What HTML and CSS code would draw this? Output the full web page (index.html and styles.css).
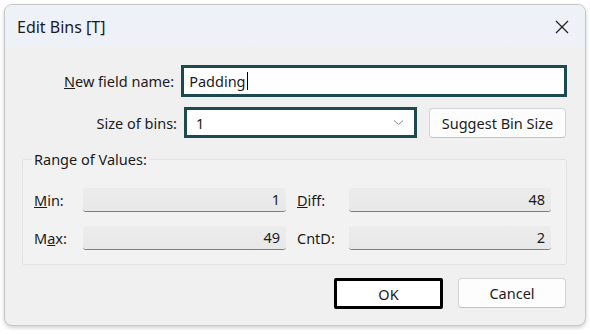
FILE: index.html
```html
<!DOCTYPE html>
<html lang="en">
<head>
    <meta charset="UTF-8">
    <title>Edit Bins [T]</title>
    <link rel="stylesheet" href="styles.css">
</head>
<body>
    <div class="dialog">
        <div class="titlebar">
            <span class="title">Edit Bins [T]</span>
            <svg class="close" width="14" height="14" viewBox="0 0 14 14">
                <path d="M1 1 L13 13 M13 1 L1 13" stroke="#222" stroke-width="1.3" fill="none"/>
            </svg>
        </div>
        <div class="content">
            <div class="row">
                <label class="label"><u>N</u>ew field name:</label>
                <div class="textbox focus">Padding<span class="caret"></span></div>
            </div>
            <div class="row">
                <label class="label">Size of bins:</label>
                <div class="textbox select focus">
                    <span>1</span>
                    <svg width="11" height="7" viewBox="0 0 11 7">
                        <path d="M1 1.5 L5.5 5.5 L10 1.5" stroke="#888" stroke-width="1" fill="none"/>
                    </svg>
                </div>
                <button class="btn suggest">Suggest Bin Size</button>
            </div>
            <fieldset class="group">
                <legend>Range of Values:</legend>
                <div class="grid">
                    <span class="flabel"><u>M</u>in:</span>
                    <div class="value">1</div>
                    <span class="flabel second"><u>D</u>iff:</span>
                    <div class="value">48</div>
                    <span class="flabel">M<u>a</u>x:</span>
                    <div class="value">49</div>
                    <span class="flabel second">CntD:</span>
                    <div class="value">2</div>
                </div>
            </fieldset>
            <div class="actions">
                <button class="btn default">OK</button>
                <button class="btn">Cancel</button>
            </div>
        </div>
    </div>
</body>
</html>
```

FILE: styles.css
```css
* {
    box-sizing: border-box;
}

:root {
    --teal: #1c4a4f;
    --text: #1b1b1b;
    --face: #f0f0f0;
}

body {
    margin: 0;
    padding: 4px;
    background: #fff;
    font-family: "Noto Sans", "Open Sans", sans-serif;
    font-size: 14.5px;
    color: var(--text);
}

.dialog {
    width: 582px;
    height: 322px;
    border: 1px solid #c6c6c6;
    border-radius: 8px;
    background: var(--face);
    box-shadow: 0 2px 4px rgba(0, 0, 0, 0.18);
    overflow: hidden;
    display: flex;
    flex-direction: column;
}

.titlebar {
    height: 45px;
    flex: none;
    display: flex;
    align-items: center;
    justify-content: space-between;
    padding: 0 16px 2px 12px;
    background: linear-gradient(#eef1f8, #eef1f8 85%, #f0f0f0);
}

.title {
    font-size: 16px;
}

.content {
    padding: 15px 18px 0 0;
}

.row {
    display: flex;
    align-items: center;
    margin-bottom: 10px;
}

.label {
    width: 172px;
    text-align: right;
    margin-right: 7px;
}

.textbox {
    height: 32px;
    background: #fff;
    display: flex;
    align-items: center;
    padding: 0 5px;
}

.textbox.focus {
    border: 3px solid var(--teal);
}

.row:first-child .textbox {
    width: 392px;
}

.caret {
    display: inline-block;
    width: 1px;
    height: 18px;
    background: #000;
    margin-left: 1px;
}

.select {
    width: 233px;
    height: 31px;
    justify-content: space-between;
    padding: 0 10px 0 9px;
}

.btn {
    font: inherit;
    color: var(--text);
    background: #fdfdfd;
    border: 1px solid #d4d4d4;
    border-bottom-color: #c2c2c2;
    border-radius: 4px;
    height: 30px;
    padding: 0;
}

.suggest {
    width: 137px;
    margin-left: 12px;
}

.group {
    margin: 11px 0 0 17px;
    width: 545px;
    height: 116px;
    border: 1px solid #e2e2e2;
    border-radius: 2px;
    padding: 0 0 0 11px;
    background: #f2f2f2;
}

.group legend {
    padding: 0 2px;
    margin-left: -2px;
}

.grid {
    display: grid;
    grid-template-columns: 49px 203px 63px 202px;
    row-gap: 14px;
    margin-top: 19px;
    align-items: center;
}

.flabel.second {
    padding-left: 11px;
}

.value {
    height: 24px;
    background: linear-gradient(#ececec, #e8e8e8);
    border-radius: 3px;
    border-bottom: 1px solid #7e7e7e;
    text-align: right;
    padding: 1px 6px 0 0;
}

.actions {
    display: flex;
    justify-content: flex-end;
    gap: 15px;
    margin-top: 13px;
    padding-right: 1px;
}

.actions .btn {
    width: 108px;
}

.actions .default {
    width: 109px;
    height: 31px;
    border: 3px solid #000;
    border-radius: 2px;
    background: #fff;
}
```
